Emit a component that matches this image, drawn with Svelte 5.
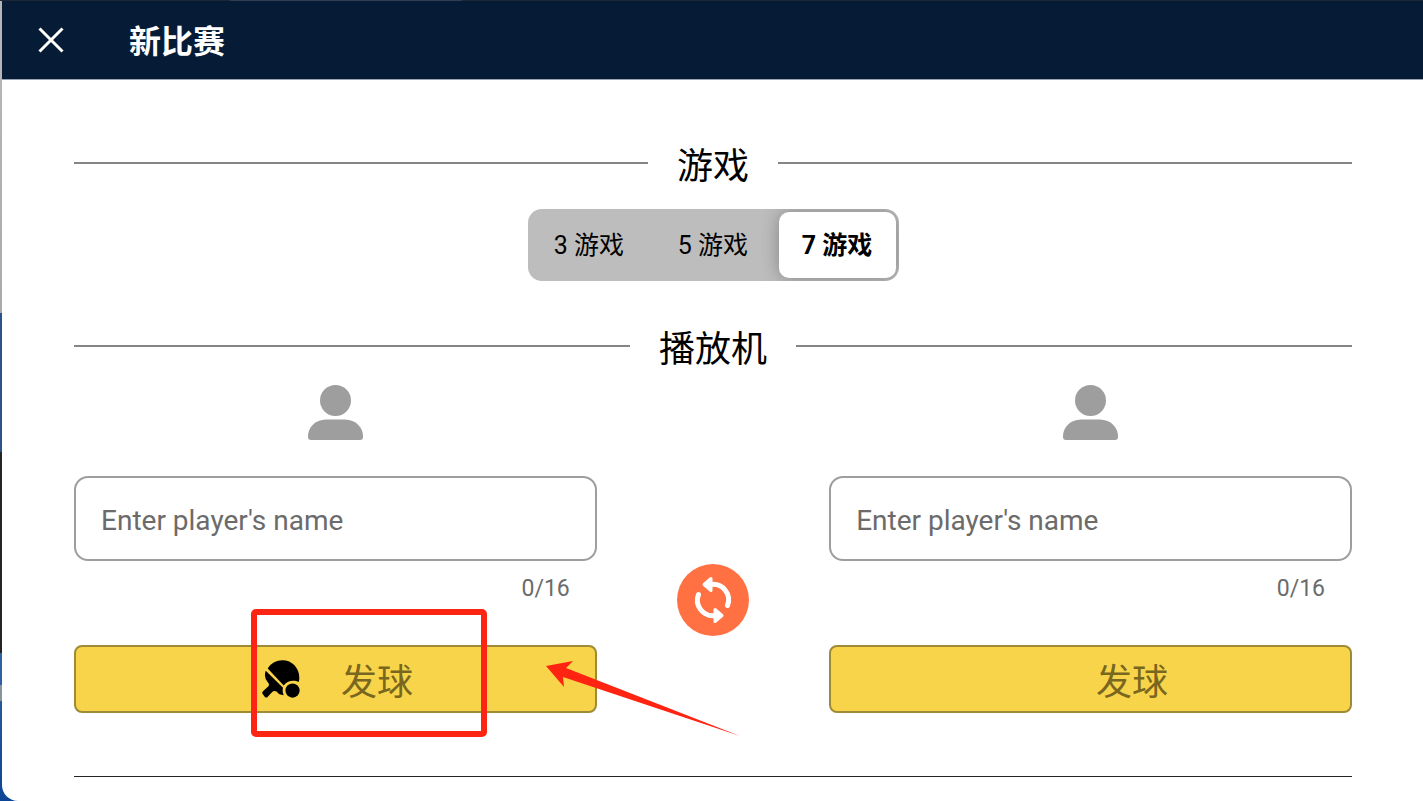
<script>
	const gameOptions = [3, 5, 7];
	const maxLength = 16;

	let games = 7;
	let serving = 0;
	let players = [
		{ id: 'home', name: '' },
		{ id: 'away', name: '' }
	];

	let swapPlayers = () => {
		players = [players[1], players[0]];
		serving = 1 - serving;
	};
</script>

<div class="desktop">
	<div class="window">
		<header>
			<button class="close" type="button" aria-label="关闭">
				<svg viewBox="0 0 28 28" aria-hidden="true">
					<path d="M2.500 2.500 L25.500 25.500 M25.500 2.500 L2.500 25.500" />
				</svg>
			</button>
			<h1>新比赛</h1>
		</header>

		<main>
			<h2>游戏</h2>
			<div class="segments" role="radiogroup" aria-label="游戏">
				{#each gameOptions as option}
					<label class:active={games === option}>
						<input type="radio" name="games" value={option} bind:group={games} />
						{option} 游戏
					</label>
				{/each}
			</div>

			<h2 class="players-title">播放机</h2>
			<div class="players">
				{#each players as player, i (player.id)}
					<section class="player">
						<svg class="avatar" viewBox="0 0 55 55" aria-hidden="true">
							<circle cx="27.5" cy="15.5" r="15.5" />
							<path d="M18 34.500 H37 C48 34.500 55 43 55 51 V52 Q55 55 52 55 H3 Q0 55 0 52 V51 C0 43 7 34.500 18 34.500 Z" />
						</svg>
						<input
							class="name"
							type="text"
							placeholder="Enter player's name"
							aria-label="Enter player's name"
							maxlength={maxLength}
							bind:value={player.name}
						/>
						<span class="counter">{player.name.length}/{maxLength}</span>
						<div class="serve-row">
							<button class="serve" type="button" on:click={() => (serving = i)}>
								<span class="paddle">
									{#if serving === i}
										<svg viewBox="67 180 112 112" aria-hidden="true">
											<path d="M84 205 C94 189 110 181 127 181 C156 181 177 204 177 232 Q177 239 175 245 C163 239 143 239 131 255 Z" />
											<path d="M78 212 L129 262 Q126 272 131 284 Q117 283 110 273 Q103 269 97 274 L84 288 Q80 293 75 288 L69 280 Q66 276 70 272 L86 257 Q90 252 85 247 Q71 232 78 212 Z" />
											<circle cx="157" cy="270" r="21" />
										</svg>
									{/if}
								</span>
								<span class="serve-text">发球</span>
							</button>
							{#if i === 0}
								<div class="highlight"></div>
								<svg class="arrow" viewBox="0 0 194 76" aria-hidden="true">
									<path d="M0 5 L27 0 L20 7 L194 75 L17 16 L18 26 Z" />
								</svg>
							{/if}
						</div>
					</section>
					{#if i === 0}
						<button class="swap" type="button" aria-label="交换" on:click={swapPlayers}>
							<svg viewBox="0 0 72 72" aria-hidden="true">
								<g id="swap-half">
									<path class="arc" d="M34 20.500 A15.500 15.500 0 0 1 50.500 41.500" />
									<path class="head" d="M27 20.500 L34 14.500 V26.500 Z" />
								</g>
								<use href="#swap-half" transform="rotate(180 36 36)" />
							</svg>
						</button>
					{/if}
				{/each}
			</div>
			<hr />
		</main>
	</div>
</div>

<style>
	:global(body) {
		margin: 0;
	}

	.desktop {
		box-sizing: border-box;
		min-height: 100vh;
		padding: 1px 0 1px 2px;
		display: flex;
		font-family: Roboto, "Noto Sans CJK SC", sans-serif;
		color: #000;
		background:
			linear-gradient(to right, #1d2635 230px, #323e50 230px 462px, #1d2635 462px) top / 100% 1px no-repeat,
			linear-gradient(to right, #0d4595 58px, #242328 58px 332px, #2c4f80 332px 375px, #999 375px) bottom / 100% 1px no-repeat,
			linear-gradient(#b5b5b5 80px, #aaa 313px, #2b5289 313px 452px, #242428 452px 653px, #3360a5 653px 685px, #8a929c 685px 701px, #2b5799 701px, #0a4595);
	}

	.window {
		flex: 1;
		background: #fff;
		border-bottom-left-radius: 16px;
	}

	header {
		height: 78px;
		display: flex;
		align-items: center;
		background: #061c36;
		border-bottom: 1px solid #9aa1b0;
	}

	button {
		font: inherit;
		cursor: pointer;
	}

	.close {
		display: flex;
		margin-left: 35px;
		padding: 0;
		border: 0;
		background: none;
	}

	.close svg {
		width: 28px;
		height: 28px;
		fill: none;
		stroke: #fff;
		stroke-width: 3;
	}

	h1 {
		margin: 0 0 0 64px;
		padding-top: 4px;
		font-size: 32px;
		line-height: 48px;
		font-weight: 700;
		color: #fff;
	}

	main {
		padding: 61px 71px 24px 72px;
	}

	h2 {
		display: flex;
		align-items: center;
		gap: 29px;
		margin: 0;
		font-size: 36px;
		line-height: 52px;
		font-weight: 400;
	}

	h2::before,
	h2::after {
		content: "";
		flex: 1;
		height: 2px;
		margin-bottom: 8px;
		background: #858585;
	}

	.segments {
		display: grid;
		grid-template-columns: repeat(3, 117px);
		gap: 7px;
		width: fit-content;
		margin: 16px auto 0;
		padding: 3px;
		border-radius: 14px;
		background: #bdbdbd;
		overflow: hidden;
	}

	.segments label {
		box-sizing: border-box;
		height: 66px;
		padding-top: 2px;
		border-radius: 10px;
		font-size: 25px;
		line-height: 64px;
		text-align: center;
		cursor: pointer;
	}

	.segments input {
		position: absolute;
		opacity: 0;
		pointer-events: none;
	}

	.segments .active {
		background: #fff;
		font-weight: 700;
		box-shadow: 0 0 18px rgba(0, 0, 0, 0.3);
	}

	.players-title {
		margin-top: 43px;
	}

	.players {
		display: grid;
		grid-template-columns: 9fr 4fr 9fr;
		margin-top: 9px;
	}

	.player {
		display: flex;
		flex-direction: column;
	}

	.avatar {
		align-self: center;
		width: 55px;
		height: 55px;
		fill: #9e9e9e;
	}

	.name {
		box-sizing: border-box;
		width: 100%;
		height: 85px;
		margin-top: 36px;
		padding: 3px 25px 0;
		border: 2px solid #9e9e9e;
		border-radius: 14px;
		background: #fff;
		font-family: inherit;
		font-size: 28px;
	}

	.name::placeholder {
		color: #6b6b6b;
		opacity: 1;
	}

	.counter {
		align-self: flex-end;
		margin: 14px 27px 0 0;
		font-size: 23px;
		line-height: 28px;
		color: #6b6b6b;
	}

	.serve-row {
		position: relative;
		margin-top: 42px;
	}

	.serve {
		display: flex;
		align-items: center;
		justify-content: center;
		gap: 41px;
		width: 100%;
		height: 68px;
		padding: 0 0 0 4px;
		border: 2px solid #9f8b35;
		border-radius: 8px;
		background: #f8d44a;
		font-size: 36px;
		line-height: 52px;
		color: #796720;
	}

	.serve-text {
		padding-top: 8px;
	}

	.paddle,
	.paddle svg {
		display: block;
		width: 38px;
		height: 38px;
	}

	.paddle svg {
		fill: #000;
	}

	.highlight {
		position: absolute;
		top: -36px;
		left: 177px;
		box-sizing: border-box;
		width: 236px;
		height: 128px;
		border: 6px solid #fc2413;
		border-radius: 5px;
		pointer-events: none;
	}

	.arrow {
		position: absolute;
		top: 16px;
		left: 472px;
		z-index: 1;
		width: 194px;
		height: 76px;
		fill: #ff2412;
		pointer-events: none;
	}

	.swap {
		align-self: end;
		justify-self: center;
		width: 72px;
		height: 72px;
		margin-bottom: 77px;
		padding: 0;
		border: 0;
		border-radius: 50%;
		background: #ff7043;
	}

	.swap svg {
		display: block;
		width: 72px;
		height: 72px;
	}

	.arc {
		fill: none;
		stroke: #fff;
		stroke-width: 5;
		stroke-linecap: round;
	}

	.head {
		fill: #fff;
		stroke: #fff;
		stroke-width: 3;
		stroke-linejoin: round;
	}

	hr {
		height: 1px;
		margin: 63px 0 0;
		border: 0;
		background: #242424;
	}
</style>
